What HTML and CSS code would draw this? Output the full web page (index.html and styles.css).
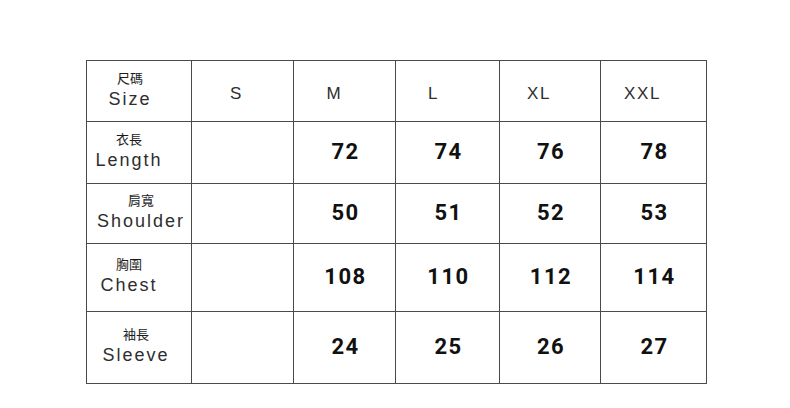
FILE: index.html
```html
<!DOCTYPE html>
<html lang="zh-Hant">
<head>
<meta charset="utf-8">
<title>Size chart</title>
<link rel="stylesheet" href="styles.css">
</head>
<body>
<div class="chart">
  <div class="cell label label-size"><span class="zh">尺碼</span><span class="en">Size</span></div>
  <div class="cell head h-s">S</div>
  <div class="cell head h-m">M</div>
  <div class="cell head h-l">L</div>
  <div class="cell head h-xl">XL</div>
  <div class="cell head h-xxl">XXL</div>

  <div class="cell label label-length"><span class="zh">衣長</span><span class="en">Length</span></div>
  <div class="cell"></div>
  <div class="cell num">72</div>
  <div class="cell num">74</div>
  <div class="cell num">76</div>
  <div class="cell num">78</div>

  <div class="cell label label-shoulder"><span class="zh">肩寬</span><span class="en">Shoulder</span></div>
  <div class="cell"></div>
  <div class="cell num">50</div>
  <div class="cell num">51</div>
  <div class="cell num">52</div>
  <div class="cell num">53</div>

  <div class="cell label label-chest"><span class="zh">胸圍</span><span class="en">Chest</span></div>
  <div class="cell"></div>
  <div class="cell num">108</div>
  <div class="cell num">110</div>
  <div class="cell num">112</div>
  <div class="cell num">114</div>

  <div class="cell label label-sleeve"><span class="zh">袖長</span><span class="en">Sleeve</span></div>
  <div class="cell"></div>
  <div class="cell num">24</div>
  <div class="cell num">25</div>
  <div class="cell num">26</div>
  <div class="cell num">27</div>
</div>
</body>
</html>
```

FILE: styles.css
```css
html, body {
  margin: 0;
  padding: 0;
  background: #ffffff;
}

body {
  width: 790px;
  height: 408px;
  overflow: hidden;
}

.chart {
  margin: 60px 0 0 86px;
  display: grid;
  grid-template-columns: 104px 101px 101px 103px 100px 105px;
  grid-template-rows: 60px 61px 59px 67px 71px;
  gap: 1px;
  padding: 1px;
  background: #4a4a4a;
  width: fit-content;
}

.cell {
  background: #ffffff;
  display: flex;
  align-items: center;
  justify-content: center;
}

.label {
  flex-direction: column;
  color: #333333;
  padding-right: 8px;
  padding-bottom: 3px;
}

.zh {
  font-family: "Noto Sans CJK TC", "Noto Sans CJK SC", sans-serif;
  font-size: 13px;
  line-height: 15px;
  color: #1a1a1a;
}

.en {
  font-family: "Liberation Sans", Arial, sans-serif;
  font-size: 18px;
  line-height: 22px;
  letter-spacing: 2px;
  margin-top: 3px;
  color: #2e2e2e;
}

.label-shoulder { padding-right: 0; padding-left: 4px; }
.label-chest { padding-right: 20px; }
.label-sleeve { padding-right: 6px; }
.label-length { padding-right: 20px; }
.label-size { padding-right: 18px; }

.head {
  font-family: "Liberation Sans", Arial, sans-serif;
  font-size: 17px;
  letter-spacing: 1.6px;
  color: #2e2e2e;
  padding-top: 6px;
}

.h-s { padding-right: 12px; }
.h-m { padding-right: 20px; }
.h-l { padding-right: 28px; }
.h-xl { padding-right: 22px; }
.h-xxl { padding-right: 22px; }

.num {
  font-family: Roboto, "DejaVu Sans", sans-serif;
  font-weight: bold;
  font-size: 22px;
  letter-spacing: 1.5px;
  color: #111111;
  padding-left: 2px;
  padding-bottom: 2px;
}
```
